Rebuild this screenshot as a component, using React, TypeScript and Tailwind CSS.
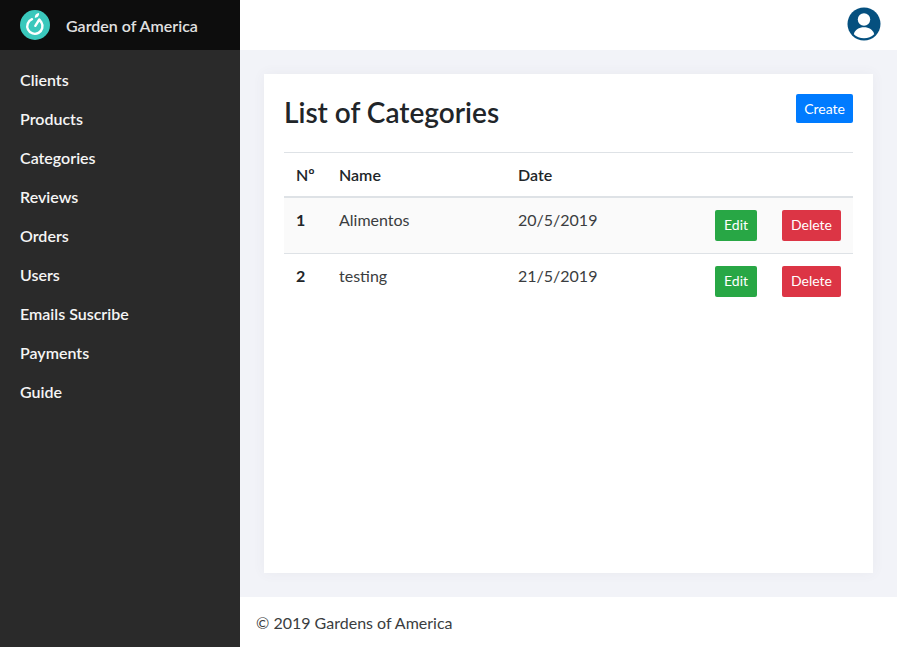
const items = ["Clients", "Products", "Categories", "Reviews", "Orders", "Users", "Emails Suscribe", "Payments", "Guide"];

const rows = [
  { id: 1, name: "Alimentos", date: "20/5/2019" },
  { id: 2, name: "testing", date: "21/5/2019" },
];

function Logo() {
  return (
    <svg viewBox="0 0 30 30" className="size-[30px]" aria-hidden="true">
      <circle cx="15" cy="15" r="15" fill="#3ac8bc" />
      <path d="M12 9.200A7.600 7.600 0 1 0 21.300 12.200L19.300 9.500L15.300 15.800" fill="none" stroke="#fff" strokeWidth="2.400" strokeLinecap="round" strokeLinejoin="round" />
      <path d="M14.800 7.800c-.2-2.800 1.400-4.600 4.200-4.900.5 2.600-1.300 4.600-4.200 4.900z" fill="#fff" />
    </svg>
  );
}

function Avatar() {
  return (
    <svg viewBox="0 0 34 34" className="size-[34px]" aria-hidden="true">
      <circle cx="17" cy="17" r="16.500" fill="#05507f" />
      <circle cx="17" cy="12.500" r="6.200" fill="#fff" />
      <path d="M6.800 27.200C8 22.700 12 20.300 17 20.300s9 2.400 10.200 6.900C24.500 30 21 31.300 17 31.300S9.500 30 6.800 27.200z" fill="#fff" />
    </svg>
  );
}

export default function App() {
  return (
    <div className="flex min-h-screen bg-[#f2f3f8] font-[Lato,sans-serif] text-base text-[#212529]">
      <aside className="w-60 shrink-0 bg-[#2a2a2a] text-white">
        <a href="#" className="flex h-[50px] items-center gap-4 bg-[#0d0d0d] px-5 font-semibold text-[#e0e0e0]">
          <Logo />
          <span className="pt-0.5">Garden of America</span>
        </a>
        <nav className="flex flex-col pt-2.5">
          {items.map((item) => (
            <a key={item} href="#" className="flex h-[39px] items-center px-5 font-semibold text-[#f5f5f5]">{item}</a>
          ))}
        </nav>
      </aside>
      <div className="flex min-w-0 grow flex-col">
        <header className="flex h-[50px] items-center justify-end bg-white px-4 pb-0.5">
          <button type="button" aria-label="Account"><Avatar /></button>
        </header>
        <main className="flex grow flex-col p-6">
          <section className="grow bg-white p-5 shadow-[0_0_12px_rgba(80,80,100,0.06)]">
            <div className="mb-5 flex items-start justify-between">
              <h1 className="pb-0.5 text-[28px] leading-9 font-semibold">List of Categories</h1>
              <button type="button" className="h-[29px] rounded-xs bg-[#007bff] px-2 text-sm text-white">Create</button>
            </div>
            <table className="w-full text-left">
              <colgroup>
                <col className="w-[43px]" />
                <col className="w-[179px]" />
                <col />
                <col className="w-[150px]" />
              </colgroup>
              <thead>
                <tr className="h-11 border-t border-b-2 border-[#dee2e6]">
                  <th className="px-3 pt-0.5 font-semibold">Nº</th>
                  <th className="px-3 pt-0.5 font-semibold">Name</th>
                  <th className="px-3 pt-0.5 font-semibold">Date</th>
                  <th />
                </tr>
              </thead>
              <tbody>
                {rows.map((r) => (
                  <tr key={r.id} className="h-14 border-t border-[#dee2e6] align-top leading-5 odd:bg-[#fafafa]">
                    <th className="p-3">{r.id}</th>
                    <td className="p-3 text-[#3a3d40]">{r.name}</td>
                    <td className="p-3 text-[#3a3d40]">{r.date}</td>
                    <td className="p-3">
                      <div className="flex justify-end gap-[25px] text-sm text-white">
                        <button type="button" className="h-[31px] rounded-xs bg-[#28a745] px-[9px]">Edit</button>
                        <button type="button" className="h-[31px] rounded-xs bg-[#dc3545] px-[9px]">Delete</button>
                      </div>
                    </td>
                  </tr>
                ))}
              </tbody>
            </table>
          </section>
        </main>
        <footer className="flex h-[50px] items-center bg-white px-4 pt-0.5 text-[#3a3d40]">© 2019 Gardens of America</footer>
      </div>
    </div>
  );
}
